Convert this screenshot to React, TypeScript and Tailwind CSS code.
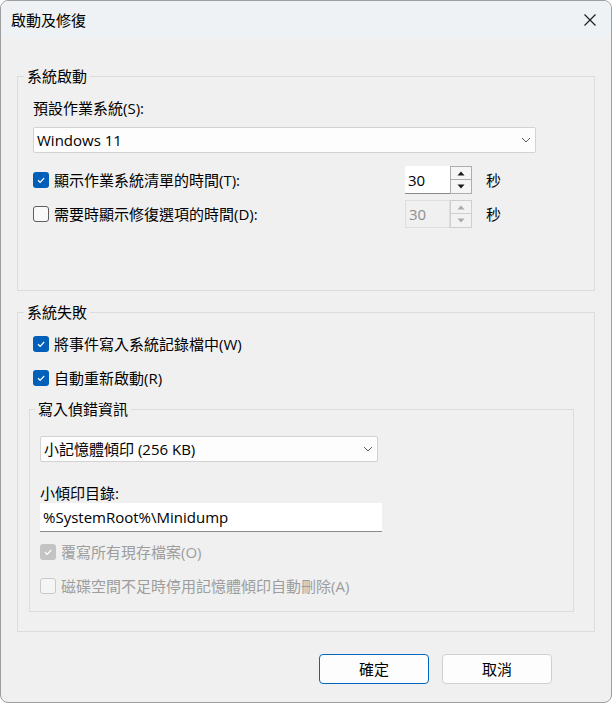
import { ReactElement } from 'react';

type BoxProps = { checked?: boolean; disabled?: boolean };

function CheckBox({ checked, disabled }: BoxProps): ReactElement {
  if (checked) {
    return (
      <span
        className={`w-[16px] h-[16px] shrink-0 rounded-[3px] flex items-center justify-center ${
          disabled ? 'bg-[#c4c4c4]' : 'bg-[#005fb8]'
        }`}
      >
        <svg width="10" height="10" viewBox="0 0 10 10">
          <path d="M2 5.3 L4.1 7.3 L8.2 3" stroke="white" strokeWidth="1.2" fill="none" />
        </svg>
      </span>
    );
  }
  return (
    <span
      className={`w-[16px] h-[16px] shrink-0 rounded-[3px] border ${
        disabled ? 'border-[#c9c9c9] bg-[#f5f5f5]' : 'border-[#5f5f5f] bg-[#f9f9f9]'
      }`}
    />
  );
}

function Chevron(): ReactElement {
  return (
    <svg width="10" height="6" viewBox="0 0 10 6">
      <path d="M1 1 L5 5 L9 1" stroke="#5a5a5a" strokeWidth="1" fill="none" />
    </svg>
  );
}

function Spin({ disabled }: { disabled?: boolean }): ReactElement {
  const arrow = disabled ? '#a9a9a9' : '#1a1a1a';
  return (
    <div className="flex h-[28px]">
      <div
        className={`w-[45px] h-[28px] pl-[3px] flex items-center ${
          disabled
            ? 'bg-[#f0f0f0] border border-[#dedede] text-[#8e8e8e]'
            : 'bg-white border-b border-[#8a8a8a] text-black'
        }`}
      >
        30
      </div>
      <div className="flex flex-col w-[22px] h-[28px]">
        <div
          className={`h-[14px] border flex items-center justify-center ${
            disabled ? 'border-[#cfcfcf] bg-[#f2f2f2]' : 'border-[#adadad] bg-[#f5f5f5]'
          }`}
        >
          <svg width="8" height="5" viewBox="0 0 8 5">
            <path d="M0.5 4.5 L4 0.5 L7.5 4.5 Z" fill={arrow} />
          </svg>
        </div>
        <div
          className={`h-[14px] border border-t-0 flex items-center justify-center ${
            disabled ? 'border-[#cfcfcf] bg-[#f2f2f2]' : 'border-[#adadad] bg-[#f5f5f5]'
          }`}
        >
          <svg width="8" height="5" viewBox="0 0 8 5">
            <path d="M0.5 0.5 L4 4.5 L7.5 0.5 Z" fill={arrow} />
          </svg>
        </div>
      </div>
    </div>
  );
}

export default function App(): ReactElement {
  return (
    <div className="w-[612px] h-[703px] bg-white">
      <div className="w-[612px] h-[703px] flex flex-col border border-[#9e9e9e] rounded-[8px] overflow-hidden bg-[#f0f0f0] font-['Open_Sans','Noto_Sans_CJK_TC',sans-serif] text-[15px] leading-[20px] text-black">
        {/* Title bar */}
        <div className="h-[37px] shrink-0 bg-[#eef2f5] flex items-center justify-between pl-[10px] pr-[15px]">
          <span>啟動及修復</span>
          <svg width="12" height="12" viewBox="0 0 12 12">
            <path d="M0.5 0.5 L11.5 11.5 M11.5 0.5 L0.5 11.5" stroke="#1a1a1a" strokeWidth="1.1" />
          </svg>
        </div>

        {/* System startup */}
        <fieldset className="mx-[16px] mt-[28px] border border-[#dcdcdc] pb-[62px]">
          <legend className="ml-[6px] px-[3px]">系統啟動</legend>
          <div className="pl-[15px] flex flex-col">
            <div className="mt-[12px]">預設作業系統(S):</div>
            <div className="mt-[9px] w-[503px] h-[26px] bg-[#fdfdfd] border border-[#d2d2d2] rounded-[2px] flex items-center justify-between pl-[3px] pr-[4px]">
              <span>Windows 11</span>
              <Chevron />
            </div>
            <div className="mt-[13px] h-[28px] flex items-center">
              <div className="w-[372px] flex items-center gap-[5px]">
                <CheckBox checked />
                <span>顯示作業系統清單的時間(T):</span>
              </div>
              <Spin />
              <span className="ml-[14px]">秒</span>
            </div>
            <div className="mt-[6px] h-[28px] flex items-center">
              <div className="w-[372px] flex items-center gap-[5px]">
                <CheckBox />
                <span>需要時顯示修復選項的時間(D):</span>
              </div>
              <Spin disabled />
              <span className="ml-[14px]">秒</span>
            </div>
          </div>
        </fieldset>

        {/* System failure */}
        <fieldset className="mx-[16px] mt-[11px] border border-[#dcdcdc] pl-[11px] pr-[20px] pb-[19px]">
          <legend className="-ml-[5px] px-[3px]">系統失敗</legend>
          <div className="mt-[8px] h-[28px] pl-[4px] flex items-center gap-[5px]">
            <CheckBox checked />
            <span>將事件寫入系統記錄檔中(W)</span>
          </div>
          <div className="mt-[6px] h-[28px] pl-[4px] flex items-center gap-[5px]">
            <CheckBox checked />
            <span>自動重新啟動(R)</span>
          </div>

          <fieldset className="mt-[7px] border border-[#dcdcdc] pl-[10px] pb-[11px]">
            <legend className="-ml-[5px] px-[3px]">寫入偵錯資訊</legend>
            <div className="mt-[17px] w-[338px] h-[26px] bg-[#fdfdfd] border border-[#d2d2d2] rounded-[2px] flex items-center justify-between pl-[3px] pr-[4px]">
              <span>小記憶體傾印 (256 KB)</span>
              <Chevron />
            </div>
            <div className="mt-[21px]">小傾印目錄:</div>
            <div className="w-[342px] h-[29px] bg-white border-b border-[#8a8a8a] pl-[3px] flex items-center">
              %SystemRoot%\Minidump
            </div>
            <div className="mt-[6px] h-[28px] flex items-center gap-[5px] text-[#9d9d9d]">
              <CheckBox checked disabled />
              <span>覆寫所有現存檔案(O)</span>
            </div>
            <div className="mt-[6px] h-[28px] flex items-center gap-[5px] text-[#9d9d9d]">
              <CheckBox disabled />
              <span>磁碟空間不足時停用記憶體傾印自動刪除(A)</span>
            </div>
          </fieldset>
        </fieldset>

        {/* Buttons */}
        <div className="mt-[22px] flex justify-end gap-[13px] pr-[59px]">
          <button className="w-[110px] h-[30px] bg-[#fdfdfd] border border-[#0067c0] rounded-[4px]">
            確定
          </button>
          <button className="w-[110px] h-[30px] bg-[#fdfdfd] border border-[#d0d0d0] rounded-[4px]">
            取消
          </button>
        </div>
      </div>
    </div>
  );
}
